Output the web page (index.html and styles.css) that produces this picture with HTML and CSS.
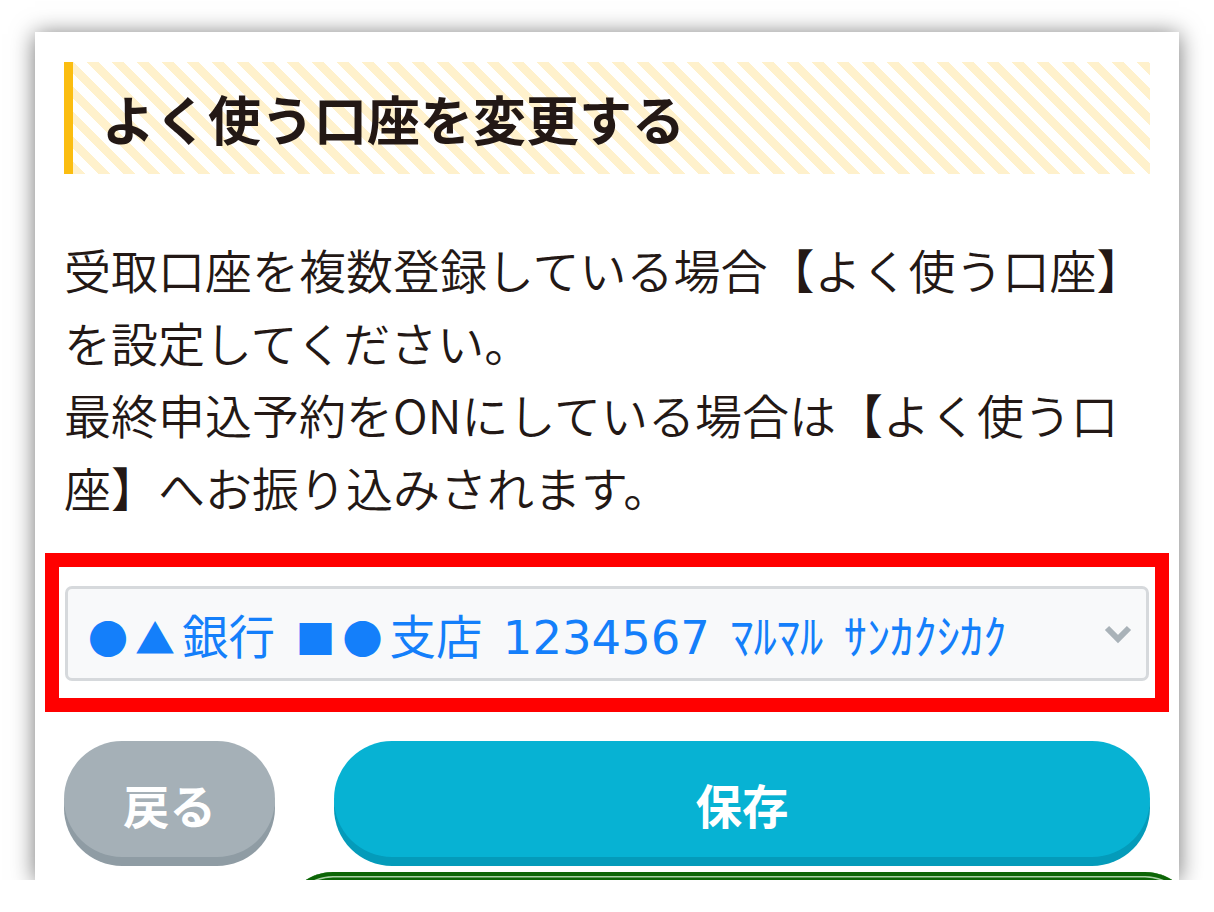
FILE: index.html
```html
<!DOCTYPE html>
<html lang="ja">
<head>
<meta charset="utf-8">
<title>よく使う口座を変更する</title>
<link rel="stylesheet" href="styles.css">
</head>
<body>
<div class="card">
  <h1 class="heading">よく使う口座を変更する</h1>
  <p class="desc">受取口座を複数登録している場合【よく使う口座】を設定してください。<br>最終申込予約をONにしている場合は【よく使う口座】へお振り込みされます。</p>
  <div class="highlight">
    <div class="select">
      <span class="select-text"><span class="sym">●▲</span>銀行 <span class="sym">■●</span>支店 <span class="num">1234567</span> ﾏﾙﾏﾙ ｻﾝｶｸｼｶｸ</span>
      <svg class="chev" width="28" height="19" viewBox="0 0 28 19"><polyline points="3,3 14,14 25,3" fill="none" stroke="#a9b2b8" stroke-width="6" stroke-linejoin="miter"/></svg>
    </div>
  </div>
  <div class="buttons">
    <div class="btn btn-back">戻る</div>
    <div class="btn btn-save">保存</div>
  </div>
  <div class="btn-green"></div>
</div>
</body>
</html>
```
FILE: styles.css
```css
html, body {
  margin: 0;
  padding: 0;
  background: #ffffff;
}
body {
  font-family: "Noto Sans CJK JP", "Noto Sans", sans-serif;
  color: #231815;
}
.card {
  box-sizing: border-box;
  margin: 32px 0 0 35px;
  width: 1144px;
  height: 848px;
  background: #fff;
  padding: 30px 29px 0 29px;
  overflow: hidden;
  box-shadow: 0 2px 22px rgba(0, 0, 0, 0.55);
}
.heading {
  margin: 0;
  height: 112px;
  box-sizing: border-box;
  display: flex;
  align-items: center;
  border-left: 9px solid #fbbd10;
  padding-left: 29px;
  font-size: 53px;
  font-weight: 700;
  color: #231815;
  background: repeating-linear-gradient(45deg, #fff1cc 0 8.84px, #ffffff 8.84px 17.68px);
}
.desc {
  margin: 59px 0 0 0;
  font-family: "Noto Sans CJK JP DemiLight", "Noto Sans CJK JP", sans-serif;
  font-size: 47px;
  line-height: 72.5px;
  font-weight: 350;
  color: #231815;
}
.highlight {
  margin: 30px -19px 0 -19px;
  border: 14px solid #ff0000;
  padding: 19px 6px 17px 6px;
  background: #fff;
}
.select {
  box-sizing: border-box;
  height: 95px;
  border: 3px solid #d6d9dc;
  border-radius: 7px;
  background: #f8f9fa;
  display: flex;
  align-items: center;
  padding: 0 14px 0 20px;
  color: #147ffa;
  font-size: 46.5px;
}
.select-text {
  white-space: pre;
  word-spacing: 10px;
  font-family: "Noto Sans CJK JP", sans-serif;
}
.sym {
  font-size: 40px;
  letter-spacing: 7px;
}
.num {
  font-family: "DejaVu Sans", sans-serif;
}
.chev {
  margin-left: auto;
  margin-top: 2px;
}
.buttons {
  display: flex;
  gap: 59px;
  margin-top: 29px;
}
.btn {
  height: 116px;
  border-radius: 60px;
  display: flex;
  align-items: center;
  justify-content: center;
  color: #fff;
  font-size: 46.5px;
  font-weight: 700;
  padding-top: 8px;
  box-sizing: border-box;
}
.btn-back {
  width: 211px;
  background: #a5b0b7;
  box-shadow: 0 9px 0 #8f9ca4;
}
.btn-save {
  flex: 1;
  background: #07b2d3;
  box-shadow: 0 9px 0 #049bba;
}
.btn-green {
  margin: 15px 0 0 219px;
  width: 912px;
  height: 120px;
  border-radius: 50px;
  background: #0c6506;
  box-shadow: inset 0 0 0 4px #0c6506, inset 0 0 0 5.5px #a9cfa5;
}
```
